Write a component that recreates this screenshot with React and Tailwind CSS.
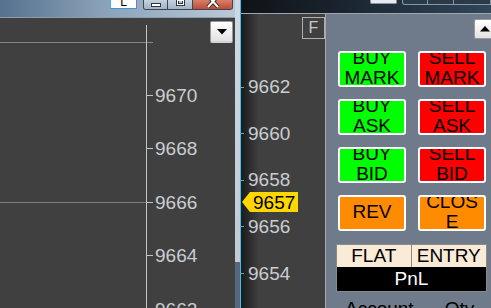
import React from 'react';

const frontPrices = [9670, 9668, 9666, 9664, 9662];
const backPrices = [9662, 9660, 9658, 9656, 9654];

const orderButtons = [
  { label: 'BUY MARK', color: 'bg-[#00ff00]' },
  { label: 'SELL MARK', color: 'bg-[#ff0000]' },
  { label: 'BUY ASK', color: 'bg-[#00ff00]' },
  { label: 'SELL ASK', color: 'bg-[#ff0000]' },
  { label: 'BUY BID', color: 'bg-[#00ff00]' },
  { label: 'SELL BID', color: 'bg-[#ff0000]' },
  { label: 'REV', color: 'bg-[#ff8c00]' },
  { label: 'CLOSE', color: 'bg-[#ff8c00]' },
];

function TitleBar() {
  return (
    <div className="flex h-[17px] shrink-0 items-start bg-[linear-gradient(to_right,#56728e,#8ba3b9_45%,#b9c9d7)] pl-[110px]">
      <div className="flex h-[9px] w-[27px] items-end justify-center overflow-hidden border border-t-0 border-l-[#36b8ec] border-r-[#8a6fd0] border-b-[#4a90d8] bg-white text-[12px] leading-[11px] text-black">
        L
      </div>
      <div className="ml-[6px] flex h-[10px] w-[90px] overflow-hidden rounded-b-[3px] border border-t-0 border-[#3d4654]">
        <div className="flex w-[24px] items-start justify-center border-r border-[#3d4654] bg-[linear-gradient(to_bottom,#c6d3df,#a2b3c4)] pt-[3px]">
          <div className="h-[4px] w-[10px] border border-[#2e3440] bg-white" />
        </div>
        <div className="flex w-[25px] items-start justify-center border-r border-[#3d4654] bg-[linear-gradient(to_bottom,#c6d3df,#a2b3c4)]">
          <div className="h-[6px] w-[9px] border border-t-0 border-[#2e3440] bg-white p-px">
            <div className="h-full w-full border border-t-0 border-[#2e3440] bg-[#b8c6d4]" />
          </div>
        </div>
        <div className="flex flex-1 items-start justify-center bg-[linear-gradient(to_bottom,#d8806a,#bf4a34)]">
          <svg width="14" height="9" viewBox="0 0 14 9">
            <path d="M2 -4 L12 7 M12 -4 L2 7" stroke="#3a2a28" strokeWidth="4" />
            <path d="M2 -4 L12 7 M12 -4 L2 7" stroke="#ffffff" strokeWidth="2" />
          </svg>
        </div>
      </div>
    </div>
  );
}

function DropButton() {
  return (
    <div className="flex h-[22px] w-[23px] items-center justify-center rounded-[2px] border border-b-2 border-[#9a9a9a] border-b-[#d4d4d4] bg-[linear-gradient(to_bottom,#ffffff,#e2e2e2)]">
      <svg width="10" height="6" viewBox="0 0 10 6">
        <polygon points="0,0 10,0 5,5.5" fill="#000" />
      </svg>
    </div>
  );
}

function FrontChart() {
  return (
    <div className="relative flex min-h-0 flex-1 items-start justify-end bg-[#404040] pr-[2px] pt-[3px]">
      <div className="absolute left-0 top-[24px] h-px w-[153px] bg-[#858585]" />
      <div className="absolute left-0 top-[184px] h-px w-[147px] bg-[#7c7c7c]" />
      <div className="absolute bottom-0 left-[146px] top-[7px] w-px bg-[#c4c4c4]" />
      {frontPrices.map((p) => {
        const top = 67.6 + (9670 - p) * 26.75;
        return (
          <React.Fragment key={p}>
            <div className="absolute left-[147px] h-px w-[6px] bg-[#c4c4c4]" style={{ top: Math.round(top + 9.3) }} />
            <div className="absolute left-[155px] text-[19px] leading-[19px] text-[#c9cdd1]" style={{ top }}>
              {p}
            </div>
          </React.Fragment>
        );
      })}
      <DropButton />
    </div>
  );
}

function FrontWindow() {
  return (
    <div className="flex h-full w-[241px] shrink-0">
      <div className="flex w-[235px] flex-col">
        <TitleBar />
        <div className="h-px shrink-0 bg-[#8d9cab]" />
        <FrontChart />
      </div>
      <div className="flex w-[5px] flex-col">
        <div className="h-[262px] shrink-0 bg-[linear-gradient(to_bottom,#cdd9e4,#c2cad2)]" />
        <div className="flex-1 bg-[#56667c]" />
      </div>
      <div className="w-px bg-[#2ec4f0]" />
    </div>
  );
}

function PriceMarker() {
  return (
    <div className="absolute left-[1px] top-[178px] flex h-[20px]">
      <svg width="8" height="20" viewBox="0 0 8 20">
        <polygon points="0,10 8,0 8,20" fill="#ffd700" />
      </svg>
      <div className="h-[20px] w-[48px] bg-[#ffd700] pl-[3px] pt-px text-[19px] leading-[19px] text-black">9657</div>
    </div>
  );
}

function BackChart() {
  return (
    <div className="relative flex w-[84px] shrink-0 items-start justify-end bg-[linear-gradient(to_right,#1a1a1a,#404040_18px)] pt-[3px]">
      <div className="flex h-[22px] w-[23px] items-center justify-center border border-[#b0b0b0] text-[16px] leading-none text-[#c8c8c8]">
        F
      </div>
      {backPrices.map((p) => {
        const top = 63.2 + (9662 - p) * 23.3;
        return (
          <React.Fragment key={p}>
            <div className="absolute left-0 h-px w-[3px] bg-[#9a9a9a]" style={{ top: Math.round(top + 9.3) }} />
            <div className="absolute left-[7px] text-[19px] leading-[19px] text-[#c9cdd1]" style={{ top }}>
              {p}
            </div>
          </React.Fragment>
        );
      })}
      <PriceMarker />
    </div>
  );
}

function OrderPanel() {
  return (
    <div className="flex flex-1 flex-col overflow-hidden bg-[#6f7b8b] pt-[5px]">
      <div className="flex shrink-0 pl-[148px]">
        <div className="flex h-[20px] w-[20px] shrink-0 items-center justify-center rounded-[2px] border border-r-0 border-[#9a9a9a] bg-[linear-gradient(to_bottom,#ffffff,#e2e2e2)]">
          <svg width="10" height="6" viewBox="0 0 10 6">
            <polygon points="0,5.5 10,5.5 5,0" fill="#000" />
          </svg>
        </div>
      </div>
      <div className="mt-[12px] grid shrink-0 grid-cols-[68px_68px] gap-[12px] pl-[12px]">
        {orderButtons.map((b) => (
          <div
            key={b.label}
            className={`flex h-[36px] items-center overflow-hidden rounded-[3px] border-2 border-white px-px pb-[3px] text-center text-[19px] leading-[20px] text-black ${b.color}`}
          >
            <span className="w-full [overflow-wrap:anywhere]">{b.label}</span>
          </div>
        ))}
      </div>
      <div className="ml-[10px] mr-[4px] mt-[13px] shrink-0 border border-[#8a8a8a]">
        <div className="grid h-[22px] grid-cols-2 bg-[#faebd7] text-center text-[19px] leading-[22px] text-black">
          <div className="border-r border-[#8a8a8a]">FLAT</div>
          <div>ENTRY</div>
        </div>
        <div className="h-[24px] bg-black text-center text-[19px] leading-[24px] text-white">PnL</div>
      </div>
      <div className="mt-[7px] flex shrink-0 text-[19px] leading-[20px] text-black">
        <span className="ml-[19px]">Account</span>
        <span className="ml-[31px]">Qty</span>
      </div>
    </div>
  );
}

function BackWindow() {
  return (
    <div className="flex h-full min-w-0 flex-1 flex-col">
      <div className="flex h-[13px] shrink-0 items-start bg-[linear-gradient(to_right,#0f1317,#1a242e_40%,#30465a)] pl-[129px]">
        <div className="h-[4px] w-[27px] rounded-b-[2px] border border-t-0 border-[#8a96a2] bg-[#e8ecf0]" />
        <div className="ml-[5px] flex h-[5px] flex-1 rounded-bl-[3px] border border-t-0 border-[#8a96a2] bg-[#2a3a48]">
          <div className="w-[25px] border-r border-[#8a96a2]" />
          <div className="w-[26px] border-r border-[#8a96a2]" />
        </div>
      </div>
      <div className="h-px shrink-0 bg-[#9ea7b0]" />
      <div className="flex min-h-0 flex-1">
        <BackChart />
        <div className="w-px bg-[#a8a8a8]" />
        <OrderPanel />
      </div>
    </div>
  );
}

export default function App() {
  return (
    <div className="flex h-[308px] w-[491px] overflow-hidden bg-[#404040] font-['Liberation_Sans',Arial,sans-serif]">
      <FrontWindow />
      <BackWindow />
    </div>
  );
}
